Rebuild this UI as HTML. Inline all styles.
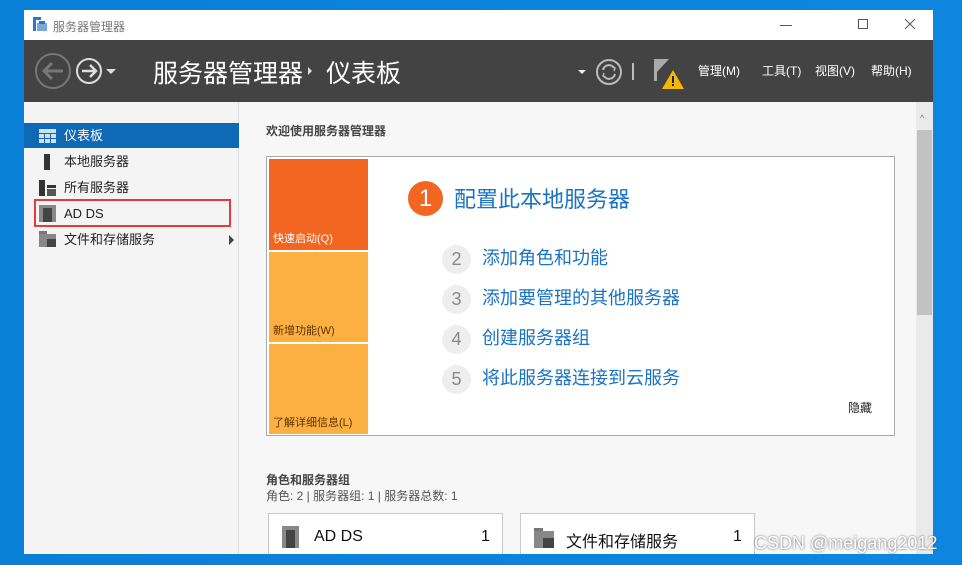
<!DOCTYPE html>
<html><head><meta charset="utf-8"><style>
*{margin:0;padding:0;box-sizing:border-box}
body{width:962px;height:565px;overflow:hidden;background:linear-gradient(90deg,#0a7fd8,#0e86e0);font-family:"Liberation Sans","Noto Sans CJK SC",sans-serif;position:relative}
.win{position:absolute;left:24px;top:10px;width:909px;height:544px;background:#f7f7f7;overflow:hidden}
.title{height:30px;background:#fff;position:relative;font-size:12px;color:#777}
.title span{position:absolute;left:29px;top:8px}
.hdr{position:absolute;top:30px;left:0;width:909px;height:62px;background:#434343}
.nav{position:absolute;top:92px;left:0;width:215px;height:452px;background:#f4f4f4;border-right:1px solid #ddd}
.ni{position:absolute;left:0;width:215px;height:25px;font-size:13px;color:#222;line-height:25px;padding-left:40px}
.abs{position:absolute}
.tile{position:absolute;left:2px;width:99px;font-size:11px;padding:0 0 4px 4px;display:flex;align-items:flex-end}
.step{position:absolute;left:175px;font-size:18px;color:#1a73c4}
.step i{display:inline-block;width:29px;height:29px;border-radius:50%;background:#eee;color:#888;font-style:normal;text-align:center;line-height:29px;font-size:18px;margin-right:11px;vertical-align:middle}
.card{position:absolute;top:503px;height:60px;background:#fff;border:1px solid #c8c8c8}
.mn{position:absolute;top:24px;font-size:12px;color:#fff;line-height:14px}
</style></head><body>
<div class="win">
 <div class="title">
  <svg class="abs" style="left:9px;top:7px" width="15" height="15"><rect x="0" y="0" width="3" height="14" fill="#2a79c4"/><rect x="3" y="0" width="5" height="3" fill="#2a79c4"/><rect x="4" y="6" width="10" height="8" fill="#7aa9d6"/><rect x="6" y="4" width="6" height="3" fill="#2a79c4"/></svg>
  <span>服务器管理器</span>
  <div class="abs" style="left:756px;top:15px;width:12px;height:1px;background:#555"></div>
  <div class="abs" style="left:834px;top:9px;width:10px;height:10px;border:1px solid #555"></div>
  <svg class="abs" style="left:880px;top:8px" width="12" height="12"><path d="M1 1L11 11M11 1L1 11" stroke="#555" stroke-width="1"/></svg>
 </div>
 <div class="hdr">
  <svg class="abs" style="left:11px;top:12px" width="98" height="38">
   <circle cx="18" cy="19" r="17" fill="none" stroke="#777" stroke-width="2"/>
   <path d="M28 19H10M17 11L9 19L17 27" fill="none" stroke="#777" stroke-width="3"/>
   <circle cx="54" cy="19" r="12" fill="none" stroke="#ddd" stroke-width="2"/>
   <path d="M47 19H60M55 13L61 19L55 25" fill="none" stroke="#ddd" stroke-width="2.5"/>
   <path d="M71 17h10l-5 5z" fill="#ddd"/>
  </svg>
  <div class="abs" style="left:129px;top:14px;font-size:25px;color:#fff">服务器管理器</div>
  <div class="abs" style="left:284px;top:27px;width:0;height:0;border-left:4px solid #ddd;border-top:4px solid transparent;border-bottom:4px solid transparent"></div>
  <div class="abs" style="left:302px;top:14px;font-size:25px;color:#fff">仪表板</div>
  <div class="abs" style="left:554px;top:30px;width:0;height:0;border-top:4px solid #eee;border-left:4px solid transparent;border-right:4px solid transparent"></div>
  <svg class="abs" style="left:572px;top:18px" width="28" height="28"><circle cx="13" cy="14" r="12" fill="none" stroke="#bbb" stroke-width="2"/><path d="M7 12a6 6 0 0 1 11-2M19 16a6 6 0 0 1-11 2" fill="none" stroke="#bbb" stroke-width="2"/><path d="M16 8l3 2l-1 3M10 20l-3-2l1-3" fill="none" stroke="#bbb" stroke-width="1.5"/></svg>
  <div class="abs" style="left:608px;top:23px;width:2px;height:17px;background:#bbb"></div>
  <svg class="abs" style="left:628px;top:17px" width="36" height="36"><rect x="2" y="2" width="3" height="22" fill="#aaa"/><path d="M5 2h12l-12 13z" fill="#aaa"/><path d="M21 13l11 19H10z" fill="#f5b800"/><rect x="20" y="19" width="2" height="7" fill="#222"/><rect x="20" y="27" width="2" height="2" fill="#222"/></svg>
  <div class="mn" style="left:674px">管理(M)</div>
  <div class="mn" style="left:738px">工具(T)</div>
  <div class="mn" style="left:791px">视图(V)</div>
  <div class="mn" style="left:847px">帮助(H)</div>
 </div>
 <div class="nav">
  <div class="ni" style="top:21px;background:#0e6ab7;color:#fff">仪表板</div>
  <svg class="abs" style="left:15px;top:27px" width="17" height="14"><g fill="#cfe0f1"><rect width="17" height="4"/><rect y="5" width="5" height="4"/><rect x="6" y="5" width="5" height="4"/><rect x="12" y="5" width="5" height="4"/><rect y="10" width="5" height="4"/><rect x="6" y="10" width="5" height="4"/><rect x="12" y="10" width="5" height="4"/></g></svg>
  <div class="ni" style="top:47px">本地服务器</div>
  <div class="abs" style="left:20px;top:52px;width:6px;height:16px;background:#333"></div>
  <div class="ni" style="top:73px">所有服务器</div>
  <svg class="abs" style="left:15px;top:78px" width="17" height="16"><rect width="6" height="16" fill="#333"/><rect x="8" y="5" width="9" height="3" fill="#333"/><rect x="8" y="9" width="9" height="7" fill="#555"/></svg>
  <div class="ni" style="top:99px">AD DS</div>
  <svg class="abs" style="left:15px;top:103px" width="17" height="17"><rect width="17" height="17" fill="#888"/><rect x="4" y="3" width="9" height="14" fill="#444"/></svg>
  <div class="abs" style="left:10px;top:97px;width:197px;height:28px;border:2px solid #e53b3b"></div>
  <div class="ni" style="top:125px">文件和存储服务</div>
  <svg class="abs" style="left:15px;top:129px" width="17" height="16"><rect width="8" height="5" fill="#777"/><rect y="3" width="17" height="13" fill="#888"/><rect x="8" y="8" width="9" height="8" fill="#444"/></svg>
  <div class="abs" style="left:205px;top:133px;width:0;height:0;border-left:5px solid #444;border-top:5px solid transparent;border-bottom:5px solid transparent"></div>
 </div>
 <div class="abs" style="left:242px;top:112px;font-size:12px;color:#444;font-weight:bold">欢迎使用服务器管理器</div>
 <div class="abs" style="left:242px;top:146px;width:629px;height:280px;background:#fff;border:1px solid #aaa">
  <div class="tile" style="top:2px;height:91px;background:#f26622;color:#fff">快速启动(Q)</div>
  <div class="tile" style="top:95px;height:90px;background:#fdb042;color:#5a3300">新增功能(W)</div>
  <div class="tile" style="top:187px;height:90px;background:#fdb042;color:#5a3300">了解详细信息(L)</div>
  <div class="abs" style="left:141px;top:24px;width:35px;height:35px;border-radius:50%;background:#f26622;color:#fff;font-size:24px;text-align:center;line-height:35px">1</div>
  <div class="abs" style="left:187px;top:25px;font-size:22px;color:#1a73c4">配置此本地服务器</div>
  <div class="step" style="top:87px"><i>2</i>添加角色和功能</div>
  <div class="step" style="top:127px"><i>3</i>添加要管理的其他服务器</div>
  <div class="step" style="top:167px"><i>4</i>创建服务器组</div>
  <div class="step" style="top:207px"><i>5</i>将此服务器连接到云服务</div>
  <div class="abs" style="left:581px;top:242px;font-size:12px;color:#222">隐藏</div>
 </div>
 <div class="abs" style="left:242px;top:461px;font-size:12px;color:#444;font-weight:bold">角色和服务器组</div>
 <div class="abs" style="left:242px;top:477px;font-size:12px;color:#555">角色: 2 | 服务器组: 1 | 服务器总数: 1</div>
 <div class="card" style="left:244px;width:235px">
  <svg class="abs" style="left:13px;top:12px" width="17" height="22"><rect width="17" height="22" fill="#888"/><rect x="4" y="4" width="9" height="18" fill="#444"/></svg>
  <div class="abs" style="left:45px;top:14px;font-size:16px;color:#111">AD DS</div>
  <div class="abs" style="left:212px;top:14px;font-size:16px;color:#111">1</div>
 </div>
 <div class="card" style="left:496px;width:235px">
  <svg class="abs" style="left:13px;top:14px" width="20" height="20"><rect width="9" height="5" fill="#777"/><rect y="3" width="20" height="17" fill="#888"/><rect x="9" y="10" width="11" height="10" fill="#444"/></svg>
  <div class="abs" style="left:45px;top:14px;font-size:16px;color:#111">文件和存储服务</div>
  <div class="abs" style="left:212px;top:14px;font-size:16px;color:#111">1</div>
 </div>
 <div class="abs" style="left:892px;top:92px;width:17px;height:452px;background:#eaeaea"></div>
 <div class="abs" style="left:896px;top:103px;font-size:9px;color:#777">^</div>
 <div class="abs" style="left:893px;top:120px;width:15px;height:185px;background:#c2c2c2"></div>
</div>
<div class="abs" style="left:754px;top:533px;font-size:18px;color:#fff;text-shadow:0 0 2px #555">CSDN @meigang2012</div>
</body></html>
